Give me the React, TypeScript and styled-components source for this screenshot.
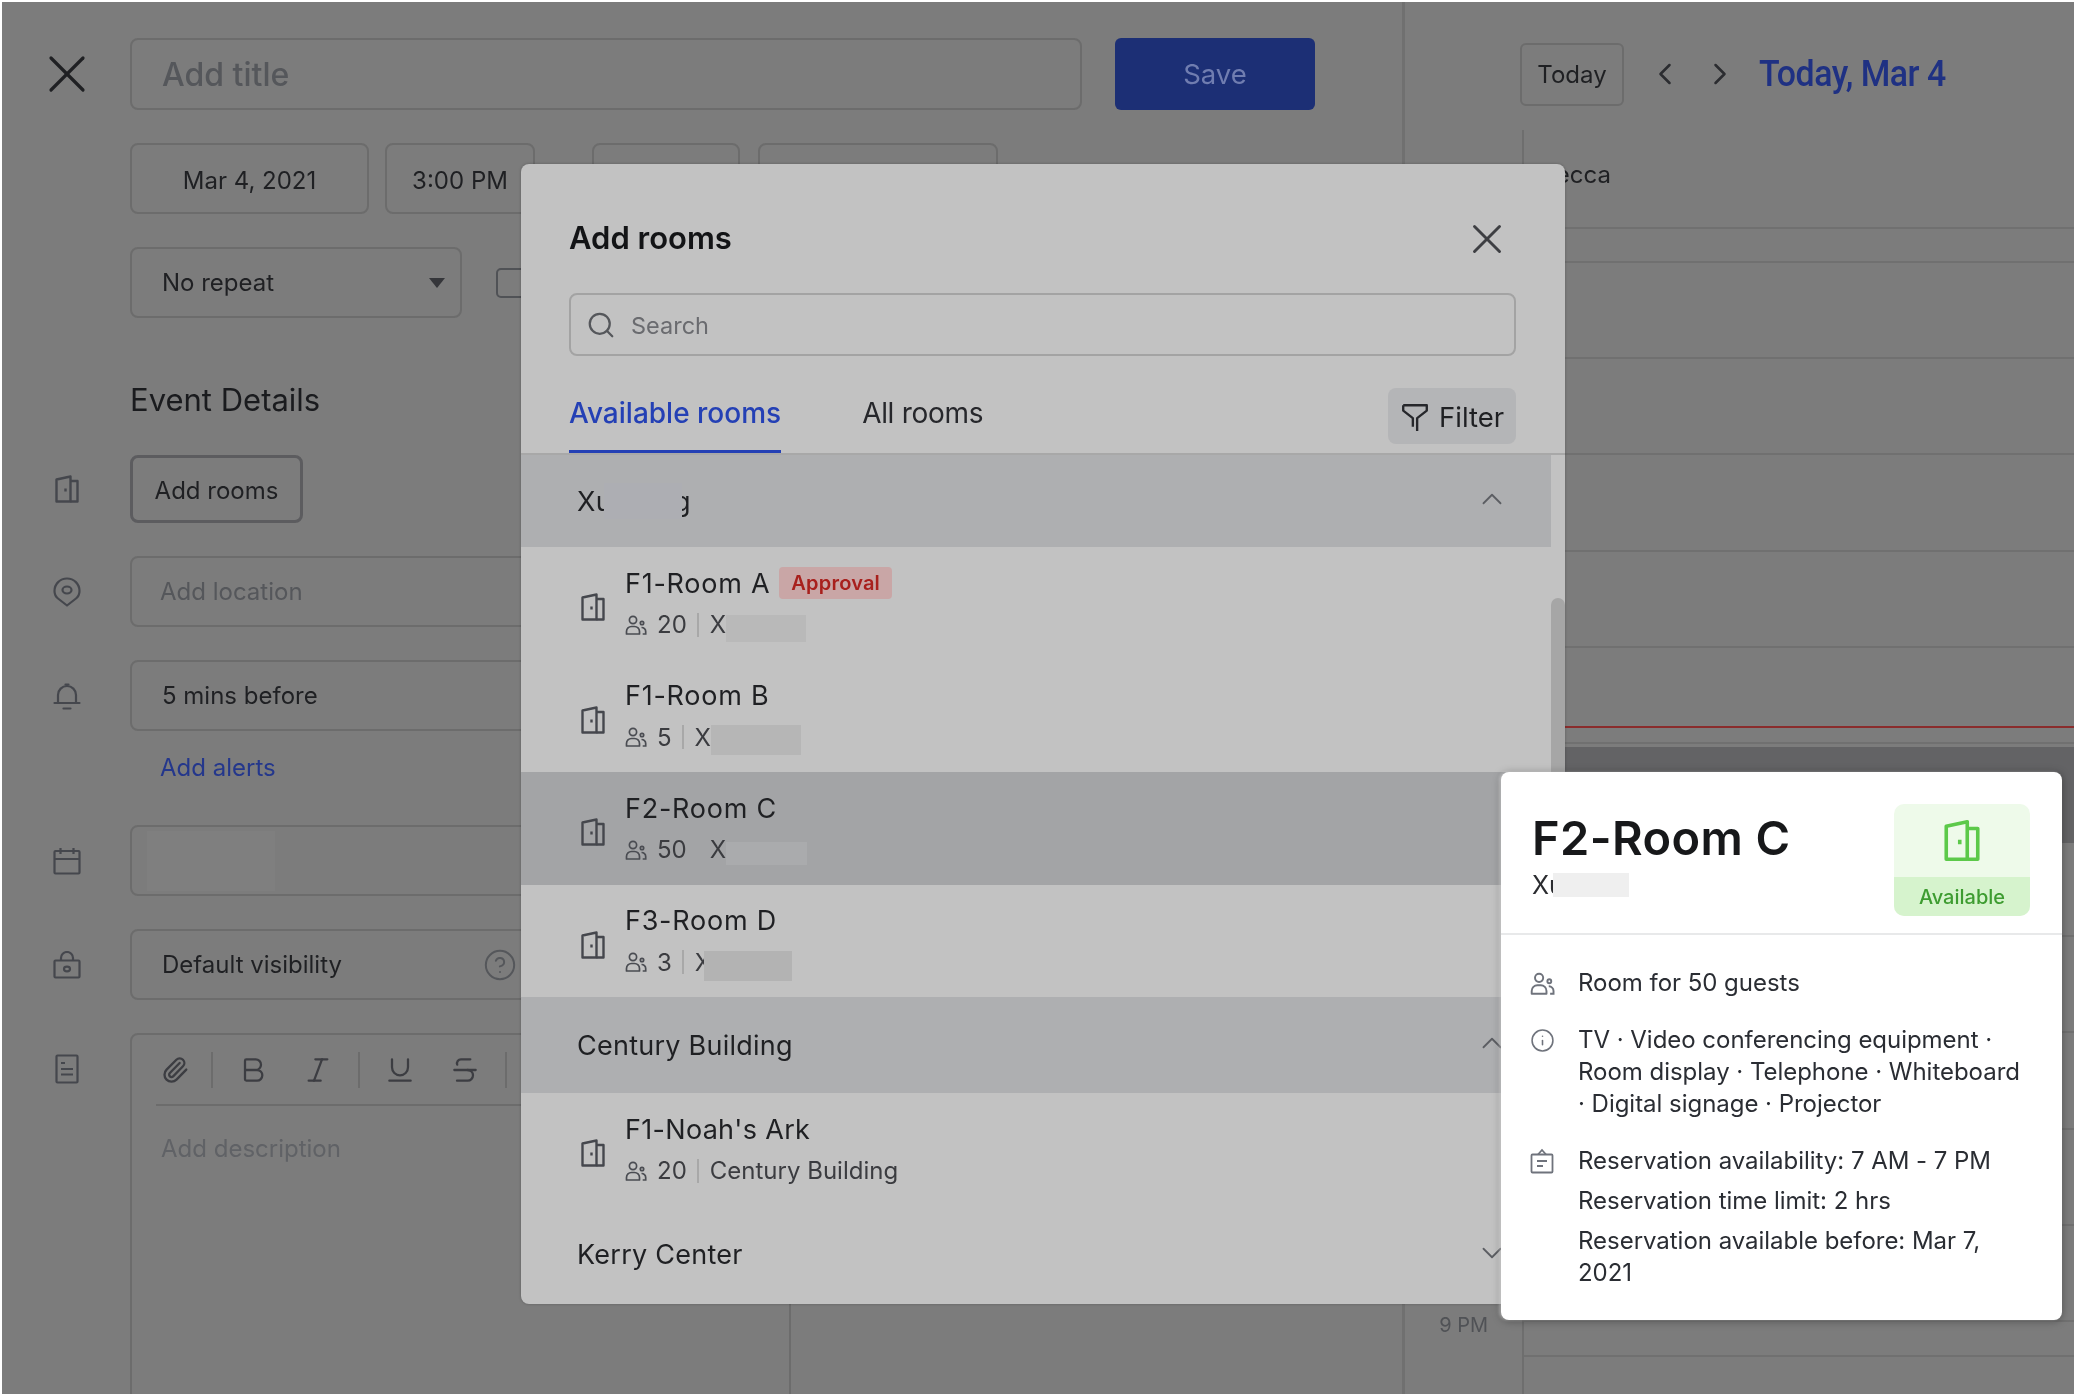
import React from "react";
import styled, { createGlobalStyle } from "styled-components";
import {
  Bold,
  ChevronDown,
  ChevronLeft,
  ChevronRight,
  ChevronUp,
  CircleHelp,
  Info,
  Italic,
  Paperclip,
  Search,
  Strikethrough,
  Underline,
  X,
} from "lucide-react";

const GlobalStyle = createGlobalStyle`
  * { box-sizing: border-box; }
  html, body { margin: 0; padding: 0; background: #fff; }
  body { font-family: Inter, "Liberation Sans", sans-serif; }
`;

const Door = ({ w = 24, h = 28, color = "#45474d" }: { w?: number; h?: number; color?: string }) => (
  <svg width={w} height={h} viewBox="0 0 24 28" fill="none" stroke={color} strokeWidth="2.4" strokeLinejoin="round">
    <path d="M1.500 4.500 15.500 1.500V26.500H1.500Z" />
    <path d="M15.500 6H22.500V26.500H15.500" />
    <path d="M10.500 13.500v3" />
  </svg>
);

const People = ({ size = 22, color = "#4a4c52" }: { size?: number; color?: string }) => (
  <svg width={size} height={size} viewBox="0 0 22 22" fill="none" stroke={color} strokeWidth="1.7">
    <circle cx="8" cy="6" r="3.600" />
    <path d="M1.500 20v-2.500a5 5 0 0 1 5-5h3a5 5 0 0 1 5 5V20Z" strokeLinejoin="round" />
    <circle cx="17" cy="9" r="1.700" />
    <path d="M16.500 13.500a4 4 0 0 1 4.200 4V20h-3" />
  </svg>
);

const Pin = () => (
  <svg width="28" height="30" viewBox="0 0 28 30" fill="none" stroke="#45474d" strokeWidth="2.2">
    <path d="M14 28.500 5 21.500C2.500 19.500 1.500 17 1.500 14 1.500 7 7 1.500 14 1.500S26.500 7 26.500 14c0 3-1 5.500-3.500 7.500Z" strokeLinejoin="round" />
    <ellipse cx="14" cy="13" rx="4.500" ry="3.500" />
  </svg>
);

const Bell = () => (
  <svg width="28" height="28" viewBox="0 0 28 28" fill="none" stroke="#45474d" strokeWidth="2.2" strokeLinecap="round">
    <path d="M5 20.500V13a9 9 0 0 1 18 0v7.500" />
    <path d="M1.500 21h25M10.500 26.500h7M12.500 2.500h3" />
  </svg>
);

const CalendarIcon = () => (
  <svg width="28" height="28" viewBox="0 0 28 28" fill="none" stroke="#45474d" strokeWidth="2.2">
    <rect x="1.500" y="4" width="25" height="22.500" rx="1" />
    <path d="M1.500 12h25M7.500 1v6M20.500 1v6" />
  </svg>
);

const LockIcon = () => (
  <svg width="28" height="28" viewBox="0 0 28 28" fill="none" stroke="#45474d" strokeWidth="2.2">
    <rect x="1.500" y="9.500" width="25" height="17" rx="1" />
    <path d="M8 9.500V7a6 6 0 0 1 12 0v2.500" />
    <ellipse cx="14" cy="18" rx="3" ry="2.300" />
  </svg>
);

const DocIcon = () => (
  <svg width="24" height="30" viewBox="0 0 24 30" fill="none" stroke="#45474d" strokeWidth="2.2">
    <rect x="1.500" y="1.500" width="21" height="27" rx="1" />
    <path d="M6 9h4M6 15h12M6 20.500h12" />
  </svg>
);

const FilterIcon = () => (
  <svg width="28" height="30" viewBox="0 0 26 28" fill="none" stroke="#26272b" strokeWidth="2.2" strokeLinejoin="round">
    <path d="M2 3H24V8L15 15V27" />
    <path d="M2 3V8L11 15V23" />
  </svg>
);

const ReserveIcon = () => (
  <svg width="24" height="26" viewBox="0 0 24 26" fill="none" stroke="#6f737c" strokeWidth="1.8">
    <rect x="1.500" y="6.500" width="21" height="18" rx="1" />
    <path d="M8 6.500 12 2l4 4.500M7 13h10M7 18h6" />
  </svg>
);

const Frame = styled.div`
  position: relative;
  display: flex;
  width: 2072px;
  height: 1392px;
  margin: 2px;
  overflow: hidden;
  background: #7c7c7c;
  filter: blur(0.5px);
`;

const FormPane = styled.div`
  display: flex;
  flex-direction: column;
  gap: 33px;
  width: 1403px;
  padding-top: 36px;
  border-right: 3px solid #707070;
`;

const FormRow = styled.div`
  display: flex;
  align-items: center;
`;

const IconCell = styled.div<{ $alignTop?: boolean }>`
  display: flex;
  justify-content: center;
  flex: 0 0 128px;
  height: 34px;
  align-items: center;
  padding-left: 2px;
  align-self: ${(p) => (p.$alignTop ? "flex-start" : "center")};
  margin-top: ${(p) => (p.$alignTop ? 19 : 0)}px;
  color: #1f2023;
`;

const Field = styled.div<{ $width: number; $center?: boolean; $muted?: boolean; $height?: number; $gap?: number }>`
  display: flex;
  align-items: center;
  justify-content: ${(p) => (p.$center ? "center" : "space-between")};
  flex: 0 0 auto;
  width: ${(p) => p.$width}px;
  height: ${(p) => p.$height ?? 71}px;
  margin-left: ${(p) => p.$gap ?? 0}px;
  padding: ${(p) => (p.$center ? "3px 0 0" : p.$muted ? "0 28px" : "0 30px")};
  border: 2px solid #6c6c6c;
  border-radius: 8px;
  font-size: 24px;
  color: ${(p) => (p.$muted ? "#55575b" : "#1f2023")};
`;

const TitleField = styled(Field)`
  padding-left: 30px;
  font-size: 32px;
  font-weight: 500;
`;

const SaveButton = styled.div`
  display: flex;
  align-items: center;
  justify-content: center;
  width: 200px;
  height: 72px;
  margin-left: 33px;
  border-radius: 6px;
  background: #1c2f75;
  color: #707db0;
  font-size: 27.500px;
`;

const Caret = styled.span`
  width: 0;
  height: 0;
  margin-right: -15px;
  border-left: 8px solid transparent;
  border-right: 8px solid transparent;
  border-top: 10px solid #35363a;
`;

const CheckBox = styled.div`
  width: 30px;
  height: 30px;
  margin-left: 34px;
  border: 2.500px solid #505256;
  border-radius: 5px;
`;

const Heading = styled.h2`
  margin: 27px 0 0 128px;
  height: 44px;
  font-size: 31px;
  line-height: 44px;
  font-weight: 400;
  color: #1a1b1e;
`;

const RoomsButton = styled.div`
  display: flex;
  align-items: center;
  justify-content: center;
  width: 173px;
  height: 68px;
  padding-top: 2px;
  border: 3px solid #5c5c5f;
  border-radius: 8px;
  font-size: 24px;
  color: #1f2023;
`;

const AlertStack = styled.div`
  display: flex;
  flex-direction: column;
  gap: 18px;
  margin-bottom: 5px;
`;

const AddAlerts = styled.span`
  padding-left: 158px;
  font-size: 24px;
  line-height: 38px;
  height: 38px;
  color: #24378c;
`;

const BlurPatch = styled.div`
  width: 128px;
  height: 60px;
  margin-left: -15px;
  background: #7f7f7f;
`;

const Editor = styled.div`
  flex: 0 0 auto;
  width: 661px;
  height: 400px;
  border: 2px solid #6c6c6c;
  border-radius: 8px 8px 0 0;
`;

const Toolbar = styled.div`
  display: flex;
  align-items: center;
  gap: 24px;
  height: 71px;
  margin-left: 24px;
  padding-left: 5px;
  border-bottom: 2px solid #6c6c6c;
  color: #3c3d42;
`;

const ClipIcon = styled(Paperclip)`
  margin-right: -2px;
`;

const ToolGroup = styled.div`
  display: flex;
  gap: 33px;
`;

const ToolDivider = styled.span`
  width: 2px;
  height: 36px;
  background: #6c6c6c;
`;

const Placeholder = styled.div`
  padding: 27px 0 0 29px;
  font-size: 24px;
  line-height: 32px;
  color: #606266;
`;

const CalendarPane = styled.div`
  display: flex;
  flex-direction: column;
  flex: 1;
`;

const CalendarBar = styled.div`
  display: flex;
  align-items: center;
  height: 128px;
  padding: 16px 0 0 115px;
  color: #2b2c30;
`;

const TodayButton = styled.div`
  display: flex;
  align-items: center;
  justify-content: center;
  width: 104px;
  height: 63px;
  margin-right: 23px;
  border: 2px solid #6c6c6c;
  border-radius: 6px;
  font-size: 24px;
  color: #1f2023;
`;

const NavIcons = styled.div`
  display: flex;
  gap: 19px;
  margin-right: 21px;
`;

const DateTitle = styled.div`
  font-family: Roboto, "Liberation Sans", sans-serif;
  font-size: 36px;
  font-weight: 500;
  letter-spacing: -0.5px;
  color: #1f3183;
  transform: scaleX(0.94);
  transform-origin: left center;
`;

const CalendarBody = styled.div`
  display: flex;
  flex: 1;
  min-height: 0;
`;

const Gutter = styled.div`
  display: flex;
  flex-direction: column;
  justify-content: flex-end;
  flex: 0 0 117px;
  padding: 0 34px 57px 0;
  text-align: right;
  font-size: 20px;
  line-height: 24px;
  color: #505256;
`;

const Grid = styled.div`
  position: relative;
  flex: 1;
  border-left: 2px solid #6e6e6e;
`;

const GridHead = styled.div`
  height: 99px;
  padding-top: 30px;
  border-bottom: 2px solid #707070;
  font-size: 24px;
  line-height: 30px;
  text-indent: -12px;
  color: #1f2023;
`;

const GridRow = styled.div<{ $height: number }>`
  height: ${(p) => p.$height}px;
  border-bottom: 2px solid #707070;
`;

const EventBlock = styled.div`
  position: absolute;
  left: 0;
  right: 0;
  top: 617px;
  height: 96px;
  background: #636365;
`;

const NowLine = styled.div`
  position: absolute;
  left: 0;
  right: 0;
  top: 596px;
  height: 2px;
  background: #8a2c2c;
`;

const Modal = styled.div`
  position: absolute;
  left: 519px;
  top: 162px;
  display: flex;
  flex-direction: column;
  width: 1044px;
  height: 1140px;
  overflow: hidden;
  border-radius: 8px;
  background: #c2c2c2;
  box-shadow: 0 0 3px rgba(0, 0, 0, 0.25);
`;

const ModalHead = styled.div`
  display: flex;
  align-items: center;
  justify-content: space-between;
  height: 129px;
  padding: 18px 53px 0 48px;
  color: #3e3f43;
  svg {
    margin-top: 3px;
  }
`;

const ModalTitle = styled.h1`
  margin: 0;
  font-size: 31px;
  font-weight: 600;
  color: #131416;
`;

const SearchBox = styled.div`
  display: flex;
  align-items: center;
  gap: 15px;
  height: 63px;
  margin: 0 49px 0 48px;
  padding: 1px 16px 0 15px;
  border: 2.500px solid #a3a3a3;
  border-radius: 8px;
  font-size: 23.500px;
  color: #6a6b6f;
`;

const TabBar = styled.div`
  display: flex;
  align-items: flex-end;
  gap: 81px;
  height: 99px;
  padding: 0 49px 0 48px;
  border-bottom: 2px solid #a8a8a8;
`;

const Tab = styled.div<{ $active?: boolean }>`
  height: 66px;
  padding-bottom: 12px;
  display: flex;
  align-items: center;
  border-bottom: 3px solid ${(p) => (p.$active ? "#2440b5" : "transparent")};
  font-size: 28px;
  font-weight: ${(p) => (p.$active ? 500 : 400)};
  letter-spacing: ${(p) => (p.$active ? 0 : -0.3)}px;
  color: ${(p) => (p.$active ? "#2440b5" : "#26272b")};
`;

const FilterButton = styled.div`
  display: flex;
  align-items: center;
  gap: 10px;
  width: 128px;
  height: 56px;
  margin: 0 0 9px auto;
  padding: 2px 0 0 13px;
  border-radius: 8px;
  background: #b4b5b7;
  font-size: 27.500px;
  color: #1f2023;
`;

const RoomList = styled.div`
  display: flex;
  flex-direction: column;
  flex: 1;
  padding-right: 14px;
`;

const GroupHeader = styled.div<{ $height: number; $shaded?: boolean }>`
  display: flex;
  align-items: center;
  justify-content: space-between;
  height: ${(p) => p.$height}px;
  padding: 0 42px 0 56px;
  background: ${(p) => (p.$shaded ? "#aeafb1" : "transparent")};
  font-size: 27px;
  letter-spacing: 0.25px;
  color: #1f2023;
  svg {
    margin-bottom: 4px;
    color: #5c5e63;
  }
`;

const GroupName = styled.span`
  display: flex;
  align-items: center;
`;

const RoomRow = styled.div<{ $active?: boolean }>`
  display: flex;
  align-items: center;
  gap: 20px;
  height: 112.500px;
  padding-left: 60px;
  background: ${(p) => (p.$active ? "#a3a4a6" : "transparent")};
`;

const RoomIcon = styled.div`
  display: flex;
  margin-top: 8px;
`;

const RoomText = styled.div`
  display: flex;
  flex-direction: column;
  gap: 7px;
`;

const RoomTitle = styled.div<{ $spacing?: number }>`
  display: flex;
  align-items: center;
  gap: 9px;
  height: 36px;
  padding-top: 1px;
  font-size: 27px;
  letter-spacing: ${(p) => p.$spacing ?? 0.75}px;
  color: #1f2023;
`;

const ApprovalTag = styled.span`
  display: flex;
  align-items: center;
  height: 32px;
  padding: 0 12px;
  border-radius: 4px;
  background: #c9a6a6;
  font-size: 20px;
  font-weight: 600;
  letter-spacing: 0.2px;
  color: #a8201d;
`;

const RoomMeta = styled.div`
  display: flex;
  align-items: center;
  height: 34px;
  font-size: 24px;
  color: #3b3c40;
`;

const Capacity = styled.span`
  margin-left: 10px;
`;

const MetaDivider = styled.span<{ $hidden?: boolean }>`
  width: 2px;
  height: 24px;
  margin: 0 11px 0 10px;
  background: ${(p) => (p.$hidden ? "transparent" : "#a8a8a8")};
`;

const Redact = styled.span<{ $w: number; $h: number; $color: string; $offset?: number; $overlap?: number; $tail?: number }>`
  position: relative;
  z-index: 1;
  display: inline-block;
  width: ${(p) => p.$w}px;
  height: ${(p) => p.$h}px;
  margin: ${(p) => p.$offset ?? 0}px ${(p) => -(p.$tail ?? 0)}px 0 ${(p) => -(p.$overlap ?? 0)}px;
  background: ${(p) => p.$color};
`;

const ScrollThumb = styled.div`
  position: absolute;
  right: 0;
  top: 434px;
  width: 14px;
  height: 340px;
  border-radius: 7px 7px 0 0;
  background: #a6a6a6;
`;

const Popover = styled.div`
  position: absolute;
  left: 1499px;
  top: 770px;
  width: 561px;
  height: 548px;
  border-radius: 8px;
  background: #fff;
  box-shadow: -2px 0 3px rgba(255, 255, 255, 0.35), 0 1px 8px rgba(0, 0, 0, 0.35);
`;

const PopoverHead = styled.div`
  display: flex;
  justify-content: space-between;
  height: 163px;
  padding: 32px 32px 0 31px;
  border-bottom: 2px solid #e8e9ea;
`;

const PopoverInfo = styled.div`
  padding-top: 4px;
`;

const PopoverTitle = styled.div`
  font-size: 47px;
  line-height: 60px;
  font-weight: 600;
  letter-spacing: 0.4px;
  color: #17181a;
`;

const PopoverSub = styled.div`
  display: flex;
  align-items: center;
  font-size: 25px;
  line-height: 34px;
  color: #2b2c30;
`;

const StatusBadge = styled.div`
  display: flex;
  flex-direction: column;
  width: 136px;
  height: 112px;
  overflow: hidden;
  border-radius: 10px;
  background: #eefaea;
`;

const StatusIcon = styled.div`
  display: flex;
  align-items: center;
  justify-content: center;
  height: 73px;
`;

const StatusLabel = styled.div`
  display: flex;
  align-items: center;
  justify-content: center;
  flex: 1;
  background: #d6f3cd;
  font-size: 20px;
  font-weight: 500;
  color: #3e9c31;
`;

const PopoverBody = styled.div`
  display: flex;
  flex-direction: column;
  gap: 25px;
  padding: 32px 30px 0 29px;
`;

const DetailRow = styled.div`
  display: flex;
  gap: 23px;
  color: #6f737c;
`;

const DetailIcon = styled.div`
  display: flex;
  flex: 0 0 25px;
  height: 32px;
  align-items: center;
`;

const DetailText = styled.div`
  font-size: 24px;
  line-height: 32px;
  letter-spacing: -0.03px;
  color: #2a2d33;
  p {
    margin: 8px 0 0;
  }
  p:first-child {
    margin-top: 0;
  }
`;

const rowHeights = [34, 96, 96, 97, 96, 96, 97, 96, 96, 97, 96, 96, 35];

const rooms = [
  { name: "F1-Room A", seats: 20, tag: true, redact: { w: 80, h: 27, color: "#b9b9b9", offset: 8, overlap: 0 } },
  { name: "F1-Room B", seats: 5, redact: { w: 90, h: 30, color: "#b6b6b6", offset: 6, overlap: 0 } },
  { name: "F2-Room C", seats: 50, active: true, noLine: true, redact: { w: 81, h: 23, color: "#aaabad", offset: 8, overlap: 0 } },
  { name: "F3-Room D", seats: 3, redact: { w: 88, h: 30, color: "#b3b3b3", offset: 8, overlap: 7 } },
];

const RoomItem = ({ room }: { room: (typeof rooms)[number] }) => (
  <RoomRow $active={room.active}>
    <RoomIcon>
      <Door />
    </RoomIcon>
    <RoomText>
      <RoomTitle>
        {room.name}
        {room.tag && <ApprovalTag>Approval</ApprovalTag>}
      </RoomTitle>
      <RoomMeta>
        <People />
        <Capacity>{room.seats}</Capacity>
        <MetaDivider $hidden={room.noLine} />X
        <Redact
          $w={room.redact.w}
          $h={room.redact.h}
          $color={room.redact.color}
          $offset={room.redact.offset}
          $overlap={room.redact.overlap}
        />
      </RoomMeta>
    </RoomText>
  </RoomRow>
);

export default function App() {
  return (
    <>
      <GlobalStyle />
      <Frame>
        <FormPane>
          <FormRow>
            <IconCell>
              <X size={64} strokeWidth={1.2} />
            </IconCell>
            <TitleField $width={952} $height={72} $muted>
              Add title
            </TitleField>
            <SaveButton>Save</SaveButton>
          </FormRow>

          <FormRow>
            <IconCell />
            <Field $width={239} $center>
              Mar 4, 2021
            </Field>
            <Field $width={150} $center $gap={16}>
              3:00 PM
            </Field>
            <Field $width={148} $center $gap={57} />
            <Field $width={240} $center $gap={18} />
          </FormRow>

          <FormRow>
            <IconCell />
            <Field $width={332}>
              No repeat
              <Caret />
            </Field>
            <CheckBox />
          </FormRow>

          <Heading>Event Details</Heading>

          <FormRow>
            <IconCell>
              <Door />
            </IconCell>
            <RoomsButton>Add rooms</RoomsButton>
          </FormRow>

          <FormRow>
            <IconCell>
              <Pin />
            </IconCell>
            <Field $width={661} $muted>
              Add location
            </Field>
          </FormRow>

          <AlertStack>
            <FormRow>
              <IconCell>
                <Bell />
              </IconCell>
              <Field $width={661}>5 mins before</Field>
            </FormRow>
            <AddAlerts>Add alerts</AddAlerts>
          </AlertStack>

          <FormRow>
            <IconCell>
              <CalendarIcon />
            </IconCell>
            <Field $width={661}>
              <BlurPatch />
            </Field>
          </FormRow>

          <FormRow>
            <IconCell>
              <LockIcon />
            </IconCell>
            <Field $width={419}>
              Default visibility
              <CircleHelp size={34} strokeWidth={1.4} color="#55575b" />
            </Field>
          </FormRow>

          <FormRow>
            <IconCell $alignTop>
              <DocIcon />
            </IconCell>
            <Editor>
              <Toolbar>
                <ClipIcon size={28} strokeWidth={2} />
                <ToolDivider />
                <ToolGroup>
                  <Bold size={32} strokeWidth={1.7} />
                  <Italic size={32} strokeWidth={1.7} />
                </ToolGroup>
                <ToolDivider />
                <ToolGroup>
                  <Underline size={32} strokeWidth={1.7} />
                  <Strikethrough size={32} strokeWidth={1.7} />
                </ToolGroup>
                <ToolDivider />
              </Toolbar>
              <Placeholder>Add description</Placeholder>
            </Editor>
          </FormRow>
        </FormPane>

        <CalendarPane>
          <CalendarBar>
            <TodayButton>Today</TodayButton>
            <NavIcons>
              <ChevronLeft size={36} strokeWidth={1.7} />
              <ChevronRight size={36} strokeWidth={1.7} />
            </NavIcons>
            <DateTitle>Today, Mar 4</DateTitle>
          </CalendarBar>
          <CalendarBody>
            <Gutter>9 PM</Gutter>
            <Grid>
              <GridHead>Rebecca</GridHead>
              {rowHeights.map((h, i) => (
                <GridRow key={i} $height={h} />
              ))}
              <EventBlock />
              <NowLine />
            </Grid>
          </CalendarBody>
        </CalendarPane>

        <Modal>
          <ModalHead>
            <ModalTitle>Add rooms</ModalTitle>
            <X size={50} strokeWidth={1.4} />
          </ModalHead>
          <SearchBox>
            <Search size={30} strokeWidth={1.8} color="#55575b" />
            Search
          </SearchBox>
          <TabBar>
            <Tab $active>Available rooms</Tab>
            <Tab>All rooms</Tab>
            <FilterButton>
              <FilterIcon />
              Filter
            </FilterButton>
          </TabBar>
          <RoomList>
            <GroupHeader $height={92} $shaded>
              <GroupName>
                Xu
                <Redact $w={78} $h={36} $color="#adaeb3" $overlap={8} $tail={8} />g
              </GroupName>
              <ChevronUp size={34} strokeWidth={1.3} />
            </GroupHeader>
            {rooms.map((room) => (
              <RoomItem key={room.name} room={room} />
            ))}
            <GroupHeader $height={96} $shaded>
              Century Building
              <ChevronUp size={34} strokeWidth={1.3} />
            </GroupHeader>
            <RoomRow>
              <RoomIcon>
                <Door />
              </RoomIcon>
              <RoomText>
                <RoomTitle $spacing={0.3}>F1-Noah's Ark</RoomTitle>
                <RoomMeta>
                  <People />
                  <Capacity>20</Capacity>
                  <MetaDivider />
                  Century Building
                </RoomMeta>
              </RoomText>
            </RoomRow>
            <GroupHeader $height={98}>
              Kerry Center
              <ChevronDown size={34} strokeWidth={1.3} />
            </GroupHeader>
          </RoomList>
          <ScrollThumb />
        </Modal>

        <Popover>
          <PopoverHead>
            <PopoverInfo>
              <PopoverTitle>F2-Room C</PopoverTitle>
              <PopoverSub>
                Xu
                <Redact $w={76} $h={24} $color="#efefef" $overlap={11} />
              </PopoverSub>
            </PopoverInfo>
            <StatusBadge>
              <StatusIcon>
                <Door w={36} h={43} color="#5cc94a" />
              </StatusIcon>
              <StatusLabel>Available</StatusLabel>
            </StatusBadge>
          </PopoverHead>
          <PopoverBody>
            <DetailRow>
              <DetailIcon>
                <People size={25} color="#6f737c" />
              </DetailIcon>
              <DetailText>Room for 50 guests</DetailText>
            </DetailRow>
            <DetailRow>
              <DetailIcon>
                <Info size={25} strokeWidth={1.5} />
              </DetailIcon>
              <DetailText>
                TV · Video conferencing equipment ·
                <br />
                Room display · Telephone · Whiteboard
                <br />· Digital signage · Projector
              </DetailText>
            </DetailRow>
            <DetailRow>
              <DetailIcon>
                <ReserveIcon />
              </DetailIcon>
              <DetailText>
                <p>Reservation availability: 7 AM - 7 PM</p>
                <p>Reservation time limit: 2 hrs</p>
                <p>
                  Reservation available before: Mar 7,
                  <br />
                  2021
                </p>
              </DetailText>
            </DetailRow>
          </PopoverBody>
        </Popover>
      </Frame>
    </>
  );
}
